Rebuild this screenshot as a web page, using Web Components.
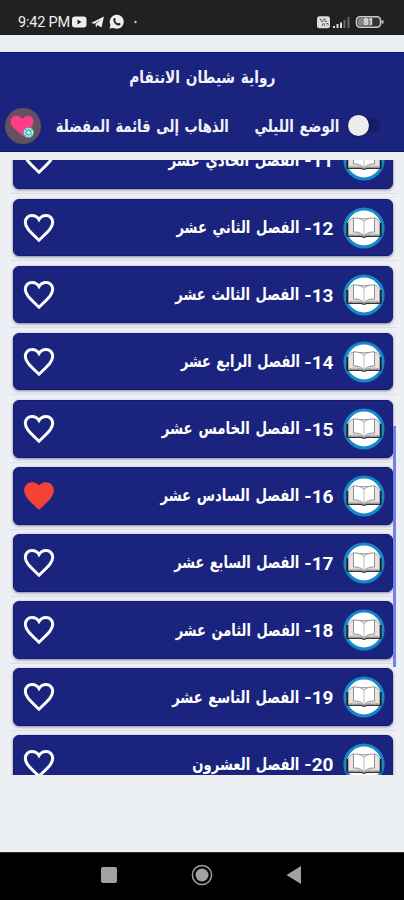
<!DOCTYPE html>
<html lang="ar">
<head>
<meta charset="utf-8">
<title>رواية شيطان الانتقام</title>
<style>
  body {
    margin: 0;
    background: #ebeff2;
    font-family: Roboto, "DejaVu Sans", sans-serif;
  }
</style>
</head>
<body>
<novel-app></novel-app>

<script>
// one line of text, squeezed horizontally to the given width
class FitText extends HTMLElement {
  constructor() {
    super();
    this.attachShadow({ mode: 'open' });
    this.shadowRoot.innerHTML = `
    <style>
      :host { display: flex; direction: rtl; white-space: nowrap; word-spacing: 3px; flex: none; }
      span { flex: none; transform-origin: right center; }
    </style>
    <span><slot></slot></span>
    `;
  }
  connectedCallback() {
    const width = Number(this.getAttribute('width'));
    const span = this.shadowRoot.querySelector('span');
    this.style.width = width + 'px';
    const natural = span.getBoundingClientRect().width;
    if (natural > 0) span.style.transform = `scaleX(${width / natural})`;
  }
}
customElements.define('fit-text', FitText);

class StatusBar extends HTMLElement {
  constructor() {
    super();
    this.attachShadow({ mode: 'open' });
    this.shadowRoot.innerHTML = `
    <style>
      :host {
        display: flex;
        box-sizing: border-box;
        height: 35px;
        padding: 9px 20px 0 18px;
        background: #212121;
        color: #eee;
        font-size: 14.5px;
        line-height: 27px;
        align-items: center;
        direction: ltr;
      }
      span { width: 53px; white-space: nowrap; height: 26px; letter-spacing: -.2px; }
      .gap { flex: 1; }
      svg { display: block; flex: none; }
    </style>
    <span>9:42 PM</span>
    <svg width="70" height="16" viewBox="0 0 70 16">
      <rect x="1" y="2.500" width="14.500" height="11" rx="3" fill="#eee"/>
      <path d="M6.500 5.500v5l4-2.500z" fill="#212121"/>
      <path d="M20 9 33 2.500 30.500 13.500 26.500 11 25 13.500 24.500 10 30.500 5.500 23.500 9.700z" fill="#eee"/>
      <path d="M38.500 14.500 39.500 11a7 7 0 1 1 3 3z" fill="#eee"/>
      <path d="M42.700 4.500c.9-1 1.500-.5 2.100 1.300l-.6 1c.6 1.400 1.500 2.200 2.800 2.800l1-.8c1.700.8 2 1.400 1 2.200-2.900 2.300-8.100-3.600-6.300-6.500z" fill="#212121"/>
      <circle cx="64.500" cy="8" r="1.200" fill="#ccc"/>
    </svg>
    <div class="gap"></div>
    <svg width="67" height="16" viewBox="0 0 67 16">
      <rect x="0" y="2.200" width="13" height="12" rx="2.500" fill="#ddd"/>
      <path d="M3 4.500 5 8l2-3.500M8 4.500v3h2M5 12l1.500-3L8 12M9 9.500h2v2" fill="none" stroke="#666"/>
      <path d="M17 14v-2M20.500 14v-4M24 14V8.500" stroke="#ddd" stroke-width="2"/>
      <path d="M27.500 14V6M31.500 14V3" stroke="#666" stroke-width="2"/>
      <rect x="39.500" y="2.800" width="24" height="10.500" rx="3.500" fill="#333" stroke="#ccc" stroke-width="1.500"/>
      <rect x="41" y="4.300" width="14" height="7.500" rx="1.500" fill="#888"/>
      <path d="M65.500 6.500v3" stroke="#ccc" stroke-width="2"/>
      <text x="51.500" y="11.200" text-anchor="middle" font-size="8.500" font-weight="700" fill="#eee">81</text>
    </svg>
    `;
  }
}
customElements.define('status-bar', StatusBar);

class NightSwitch extends HTMLElement {
  constructor() {
    super();
    this.attachShadow({ mode: 'open' });
    this.shadowRoot.innerHTML = `
    <style>
      :host { display: flex; align-items: center; width: 33px; height: 22px; direction: ltr; }
      .track { display: flex; align-items: center; width: 32px; height: 15px; border-radius: 8px; background: #181b66; }
      .thumb { width: 21px; height: 21px; border-radius: 50%; background: #ececec; flex: none; box-shadow: 0 1px 2px rgba(0,0,0,.35); }
    </style>
    <div class="track"><div class="thumb"></div></div>
    `;
  }
}
customElements.define('night-switch', NightSwitch);

class AppHeader extends HTMLElement {
  constructor() {
    super();
    this.attachShadow({ mode: 'open' });
    this.shadowRoot.innerHTML = `
    <style>
      :host {
        display: block;
        box-sizing: border-box;
        height: 100px;
        background: #1a237e;
        border-top: 1px solid #10186c;
        border-bottom: 1px solid #10186c;
        color: #f2f2fa;
        font-weight: 700;
        direction: rtl;
      }
      .title { display: flex; justify-content: center; height: 48px; align-items: center; font-size: 17px; }
      .tools { display: flex; height: 49px; align-items: center; padding: 0 23px 0 5px; font-size: 17px; }
      .night { margin-right: 9px; }
      .fav { margin-right: 25px; }
      svg { margin-right: auto; flex: none; }
    </style>
    <div class="title"><fit-text width="146">رواية شيطان الانتقام</fit-text></div>
    <div class="tools">
      <night-switch></night-switch>
      <fit-text class="night" width="85">الوضع الليلي</fit-text>
      <fit-text class="fav" width="173">الذهاب إلى قائمة المفضلة</fit-text>
      <svg width="36" height="36" viewBox="0 0 36 36">
        <circle cx="18" cy="18" r="18" fill="#66505f"/>
        <path d="M17.500 28 C13 23 5.500 19 5.500 13.500 C5.500 7 14 5.500 17.500 11.500 C20 5.500 28.500 7 28.500 13.500 C28.500 19 22 23 17.500 28z" fill="#ff3d86"/>
        <circle cx="23.500" cy="24.500" r="5.600" fill="#3fb5ac"/>
        <circle cx="23.500" cy="24.500" r="3.900" fill="none" stroke="#e4f6f4" stroke-width="1.300" stroke-dasharray="2.300 .8"/>
        <path d="M21.500 24.500h4M23.500 22.500v4" stroke="#fff" stroke-width="1.300"/>
      </svg>
    </div>
    `;
  }
}
customElements.define('app-header', AppHeader);

class BookIcon extends HTMLElement {
  constructor() {
    super();
    this.attachShadow({ mode: 'open' });
    this.shadowRoot.innerHTML = `
    <style>
      :host { display: block; width: 42px; height: 42px; flex: none; }
      svg { display: block; }
    </style>
    <svg width="42" height="42" viewBox="0 0 42 42">
      <circle cx="21" cy="21" r="19" fill="#fff" stroke="#1488c8" stroke-width="3.200"/>
      <path d="M4.200 16v13.500M37.800 16v13.500" stroke="#222" stroke-width="1.800"/>
      <path d="M3.500 29.200h14.500q3 2 6 0h14.500" fill="none" stroke="#333" stroke-width="1.600"/>
      <path d="M8.500 11.500 5.500 15v13c6-1.500 11-1 15.500 1 4.500-2 9.500-2.500 15.500-1V15l-3-3.500z" fill="#e4e4e4" stroke="#888" stroke-width=".7"/>
      <path d="M21 14.500C18 10.500 13 11.500 10.500 10.500v14.500c4 0 8 .5 10.500 4 2.500-3.500 6.500-4 10.500-4V10.500C29 11.500 24 10.500 21 14.500z" fill="#fff" stroke="#888" stroke-width=".9"/>
      <path d="M21 14.500v14" stroke="#bbb"/>
    </svg>
    `;
  }
}
customElements.define('book-icon', BookIcon);

class ChapterRow extends HTMLElement {
  constructor() {
    super();
    this.attachShadow({ mode: 'open' });
    this.shadowRoot.innerHTML = `
    <style>
      :host {
        display: flex;
        flex-direction: column;
        flex: none;
        box-sizing: border-box;
        height: 67.100px;
        margin: 0 7px 0 10px;
      }
      .card {
        display: flex;
        align-items: center;
        box-sizing: border-box;
        height: 57.600px;
        margin: 0 4.500px 0 3px;
        padding: 0 7px 0 9px;
        border-radius: 6px;
        background: #1a237e;
        border: 1px solid #141b70;
        box-shadow: 0 1px 3px rgba(40,45,90,.55);
        color: #fff;
        font-weight: 700;
        direction: rtl;
      }
      .num { width: 34px; margin-right: 9px; font-size: 19px; line-height: 24px; white-space: nowrap; flex: none; padding-top: 2px; }
      fit-text { font-size: 17px; padding-bottom: 1px; }
      .heart { margin-right: auto; flex: none; }
      path { fill: none; stroke: #fff; stroke-width: 3; }
      :host([liked]) path { fill: #f44336; stroke: #f44336; stroke-width: 2.500; }
      hr { width: 100%; height: 1px; margin: 4px 0 0; border: 0; background: #dcdee1; }
    </style>
    <div class="card">
      <book-icon></book-icon>
      <span class="num">${this.getAttribute('number')}-</span>
      <fit-text width="${this.getAttribute('label-width')}">${this.getAttribute('label')}</fit-text>
      <svg class="heart" width="32" height="30" viewBox="0 0 32 30">
        <path d="M16 27.200C8 19.500 2.300 15 2.300 9.300C2.300 5.300 5.300 2.500 9 2.500C11.800 2.500 14.500 4 16 6.500C17.500 4 20.200 2.500 23 2.500C26.700 2.500 29.700 5.300 29.700 9.300C29.700 15 24 19.500 16 27.200Z"/>
      </svg>
    </div>
    <hr>
    `;
  }
}

class ChapterList extends HTMLElement {
  constructor() {
    super();
    this.attachShadow({ mode: 'open' });
    this.shadowRoot.innerHTML = `
    <style>
      :host { display: grid; height: 615px; margin-top: 8px; overflow: hidden; background: #eceff4; }
      .rows, .bar { grid-area: 1 / 1; }
      .rows { display: flex; flex-direction: column; margin-top: -28.400px; height: 643px; }
      .bar { justify-self: end; width: 3px; height: 241px; margin: 266px 8px 0 0; background: #7580ee; }
    </style>
    <div class="rows"><slot></slot></div>
    <div class="bar"></div>
    `;
  }
}
customElements.define('chapter-list', ChapterList);

class NavBar extends HTMLElement {
  constructor() {
    super();
    this.attachShadow({ mode: 'open' });
    this.shadowRoot.innerHTML = `
    <style>
      :host { display: flex; justify-content: space-between; align-items: center; box-sizing: border-box; height: 48px; padding: 0 102px 3px 100px; background: #000; border-top: 1px solid #333; }
      svg { display: block; }
    </style>
    <svg width="17" height="22"><rect x="1" y="3" width="16" height="16" rx="2" fill="#a2a2a2"/></svg>
    <svg width="22" height="22"><circle cx="11" cy="11" r="9.600" fill="none" stroke="#a2a2a2" stroke-width="1.500"/><circle cx="11" cy="11" r="6.500" fill="#a2a2a2"/></svg>
    <svg width="16" height="22"><path d="M.5 11 15 2v18z" fill="#a2a2a2"/></svg>
    `;
  }
}
customElements.define('nav-bar', NavBar);

class NovelApp extends HTMLElement {
  constructor() {
    super();
    this.attachShadow({ mode: 'open' });
    this.shadowRoot.innerHTML = `
    <style>
      :host { display: flex; flex-direction: column; height: 900px; overflow: hidden; }
      app-header { margin-top: 17px; flex: none; }
      status-bar, chapter-list, nav-bar { flex: none; }
      nav-bar { margin-top: auto; }
    </style>
    <status-bar></status-bar>
    <app-header></app-header>
    <chapter-list>
      <chapter-row number="11" label-width="131" label="الفصل الحادي عشر"></chapter-row>
      <chapter-row number="12" label-width="123" label="الفصل الثاني عشر"></chapter-row>
      <chapter-row number="13" label-width="124" label="الفصل الثالث عشر"></chapter-row>
      <chapter-row number="14" label-width="119" label="الفصل الرابع عشر"></chapter-row>
      <chapter-row number="15" label-width="138" label="الفصل الخامس عشر"></chapter-row>
      <chapter-row number="16" label-width="139" label="الفصل السادس عشر" liked></chapter-row>
      <chapter-row number="17" label-width="125" label="الفصل السابع عشر"></chapter-row>
      <chapter-row number="18" label-width="124" label="الفصل الثامن عشر"></chapter-row>
      <chapter-row number="19" label-width="127" label="الفصل التاسع عشر"></chapter-row>
      <chapter-row number="20" label-width="107" label="الفصل العشرون"></chapter-row>
    </chapter-list>
    <nav-bar></nav-bar>
    `;
  }
}
customElements.define('novel-app', NovelApp);
// rows are upgraded last, once their attributes are in the tree
customElements.define('chapter-row', ChapterRow);
</script>
</body>
</html>
